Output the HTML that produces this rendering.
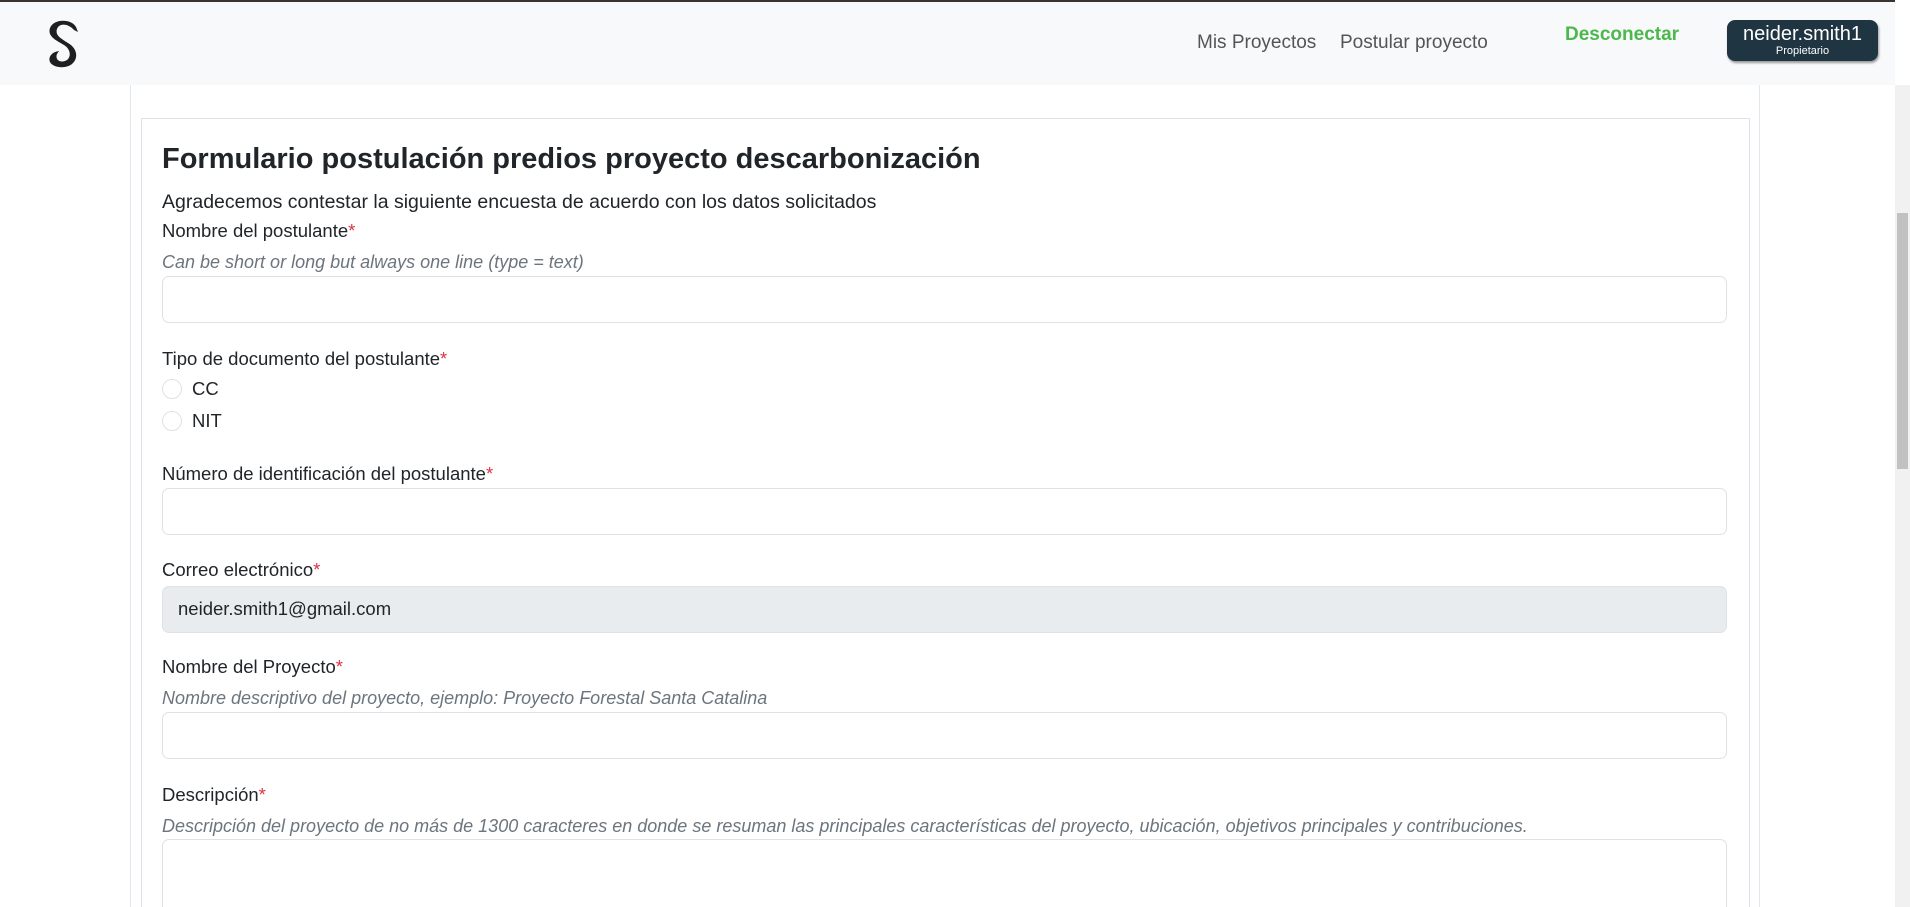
<!DOCTYPE html>
<html><head><meta charset="utf-8"><style>
*{box-sizing:border-box;margin:0;padding:0}
html,body{width:1910px;height:907px;overflow:hidden}
body{background:#fff;font-family:"Liberation Sans",sans-serif;color:#212529;position:relative}
.a{position:absolute;white-space:nowrap}
.hdr{position:absolute;left:0;top:0;width:1895px;height:85px;background:#f8f9fa;border-top:2px solid #3a3430}
.lbl{font-size:18.5px;line-height:22px}
.sub{font-size:19.5px;line-height:22px}
.req{color:#dc3545}
.hint{font-size:18px;font-style:italic;color:#6c757d;line-height:20px}
.inp{position:absolute;left:162px;width:1565px;height:47px;border:1px solid #dee2e6;border-radius:7px;background:#fff}
.radio{position:absolute;left:162px;width:20px;height:20px;border:1px solid #dee2e6;border-radius:50%}
</style></head><body>
<div class="hdr"></div>
<svg class="a" style="left:46px;top:18px" width="34" height="50" viewBox="0 0 34 50"><path d="M30 9 C26 1 8 0 4 10 C1 19 12 23 18 27 C26 32 25 41 19 43 C13 45 9 41 11 36 L13 33 C5 34 2 40 4 44 C7 50 20 51 26 46 C33 40 31 30 22 25 C14 20 9 17 11 11 C13 5 22 5 28 12 L32 14 Z" fill="#1f1f1f"/></svg>
<div class="a" style="left:1197px;top:32px;font-size:19px;color:#555">Mis Proyectos</div>
<div class="a" style="left:1340px;top:32px;font-size:19px;color:#555">Postular proyecto</div>
<div class="a" style="left:1565px;top:24px;font-size:19px;font-weight:bold;color:#4cb84c">Desconectar</div>
<div class="a" style="left:1727px;top:20px;width:151px;height:41px;background:#1f3541;border-radius:8px;box-shadow:1px 2px 2px #999;color:#fff;text-align:center">
<div style="font-size:20px;line-height:22px;margin-top:3px">neider.smith1</div><div style="font-size:11px;line-height:12px">Propietario</div></div>
<div class="a" style="left:1895px;top:85px;width:15px;height:822px;background:#f1f1f1"></div>
<div class="a" style="left:1897px;top:213px;width:11px;height:256px;background:#c1c1c1"></div>
<div class="a" style="left:130px;top:85px;width:1630px;height:822px;border-left:1px solid #e3e6ea;border-right:1px solid #e3e6ea"></div>
<div class="a" style="left:141px;top:118px;width:1609px;height:789px;border:1px solid #dee2e6;border-bottom:none"></div>
<div class="a" style="left:162px;top:143px;font-size:29px;font-weight:bold">Formulario postulación predios proyecto descarbonización</div>
<div class="a sub" style="left:162px;top:191px">Agradecemos contestar la siguiente encuesta de acuerdo con los datos solicitados</div>
<div class="a lbl" style="left:162px;top:220px">Nombre del postulante<span class="req">*</span></div>
<div class="a hint" style="left:162px;top:252px">Can be short or long but always one line (type = text)</div>
<div class="inp" style="top:276px"></div>
<div class="a lbl" style="left:162px;top:348px">Tipo de documento del postulante<span class="req">*</span></div>
<div class="radio" style="top:379px"></div><div class="a lbl" style="left:192px;top:378px">CC</div>
<div class="radio" style="top:411px"></div><div class="a lbl" style="left:192px;top:410px">NIT</div>
<div class="a lbl" style="left:162px;top:463px">Número de identificación del postulante<span class="req">*</span></div>
<div class="inp" style="top:488px"></div>
<div class="a lbl" style="left:162px;top:559px">Correo electrónico<span class="req">*</span></div>
<div class="inp" style="top:586px;background:#e9ecef"></div>
<div class="a lbl" style="left:178px;top:598px">neider.smith1@gmail.com</div>
<div class="a lbl" style="left:162px;top:656px">Nombre del Proyecto<span class="req">*</span></div>
<div class="a hint" style="left:162px;top:688px">Nombre descriptivo del proyecto, ejemplo: Proyecto Forestal Santa Catalina</div>
<div class="inp" style="top:712px"></div>
<div class="a lbl" style="left:162px;top:784px">Descripción<span class="req">*</span></div>
<div class="a hint" style="left:162px;top:816px">Descripción del proyecto de no más de 1300 caracteres en donde se resuman las principales características del proyecto, ubicación, objetivos principales y contribuciones.</div>
<div class="inp" style="top:839px;height:68px;border-bottom:none;border-radius:7px 7px 0 0"></div>
</body></html>
